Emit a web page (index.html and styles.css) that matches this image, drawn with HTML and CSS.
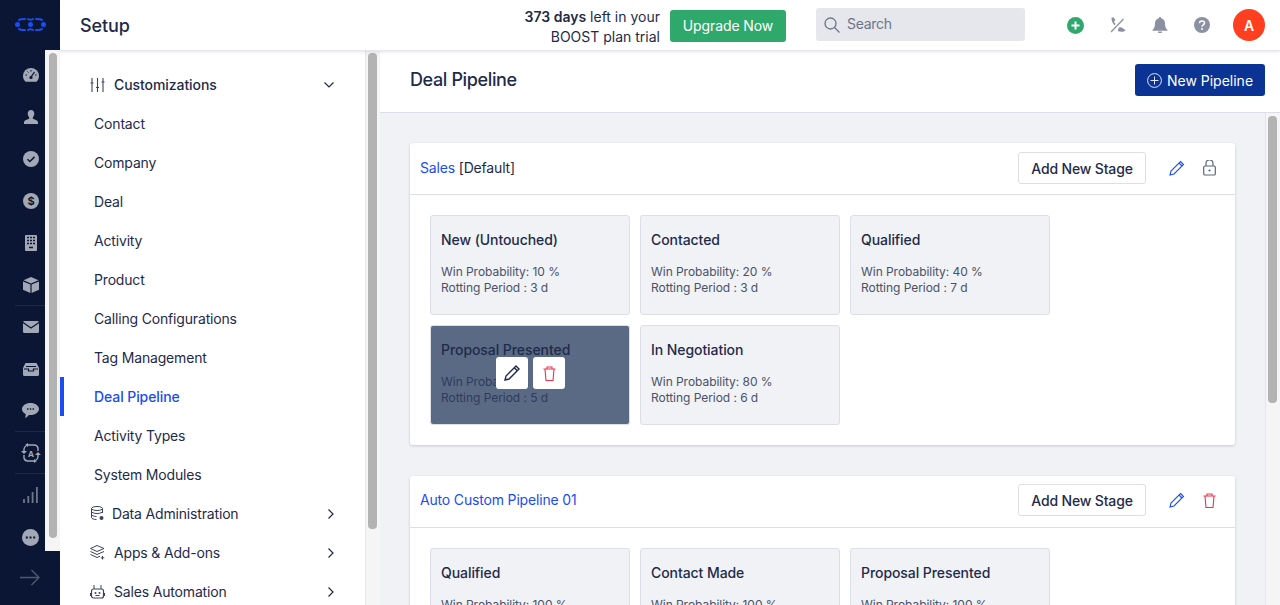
FILE: index.html
```html
<!DOCTYPE html>
<html lang="en">
<head>
    <meta charset="UTF-8">
    <meta name="viewport" content="width=device-width, initial-scale=1.0">
    <title>Setup - Deal Pipeline</title>
    <link rel="stylesheet" href="styles.css">
</head>
<body>
    <!-- left icon rail -->
    <nav class="rail">
        <div class="rail-logo">
            <svg width="31" height="13" viewBox="0 0 31 13"><path d="M4 2C5 1 7 1 10 1M13 1q2.500 1.500 5 0M21 1c3 0 5 0 6 1M4 11c1 1 3 1 6 1M13 12q2.500-1.500 5 0M21 12c3 0 5 0 6-1" fill="none" stroke="#1c4df0" stroke-width="2" stroke-linecap="round"/><circle cx="2.500" cy="6.500" r="2.500" fill="#1c4df0"/><circle cx="15.500" cy="6.500" r="2.500" fill="#1c4df0"/><circle cx="28.500" cy="6.500" r="2.500" fill="#1c4df0"/></svg>
        </div>
        <div class="rail-icons">
            <span class="rail-icon"><svg width="16" height="14" viewBox="0 0 16 14"><path d="M8 0a8 8 0 0 0-8 8c0 2.400 1 4.400 2.500 5.700h11C15 12.400 16 10.400 16 8a8 8 0 0 0-8-8z" fill="#a3a8b6"/><path d="M8 9l3.500-5" stroke="#0a1633" stroke-width="1.300"/><circle cx="8" cy="9.500" r="1.600" fill="#0a1633"/><path d="M2.500 7h1.500M12 7h1.500M4.500 3.500l1 1M8 2v1.500" stroke="#0a1633"/></svg></span>
            <span class="rail-icon"><svg width="14" height="14" viewBox="0 0 14 14"><path d="M7 0c2 0 3.300 1.500 3.300 3.600 0 1.500-.7 3-1.500 3.800v1.100c0 .6 4.500 1.300 5.200 3.500v2H0v-2c.7-2.200 5.200-2.900 5.200-3.500V7.400C4.400 6.600 3.700 5.100 3.700 3.600 3.700 1.500 5 0 7 0z" fill="#a3a8b6"/></svg></span>
            <span class="rail-icon"><svg width="16" height="16" viewBox="0 0 16 16"><circle cx="8" cy="8" r="8" fill="#a3a8b6"/><path d="M4.500 8.200l2.400 2.300 4.600-4.600" fill="none" stroke="#0a1633" stroke-width="1.500"/></svg></span>
            <span class="rail-icon"><svg width="16" height="16" viewBox="0 0 16 16"><circle cx="8" cy="8" r="8" fill="#a3a8b6"/><text x="8" y="12" text-anchor="middle" class="rail-dollar">$</text></svg></span>
            <span class="rail-icon"><svg width="12" height="16" viewBox="0 0 12 16"><rect width="12" height="16" rx="1" fill="#a3a8b6"/><path d="M2 2.500h2M5 2.500h2M8 2.500h2M2 5.500h2M5 5.500h2M8 5.500h2M2 8.500h2M5 8.500h2M8 8.500h2M4 12.500h4" stroke="#0a1633" stroke-width="1.300"/></svg></span>
            <span class="rail-icon rail-last"><svg width="16" height="16" viewBox="0 0 16 16"><path d="M8 0l7.500 3.200L8 6.400.5 3.200z" fill="#a3a8b6"/><path d="M0 4.400l7.400 3.200V16L0 12.800zM16 4.400L8.600 7.600V16l7.400-3.200z" fill="#a3a8b6"/></svg></span>
            <span class="rail-icon"><svg width="16" height="12" viewBox="0 0 16 12"><rect width="16" height="12" rx="1.500" fill="#a3a8b6"/><path d="M0 1.500l8 5.500 8-5.500" fill="none" stroke="#0a1633" stroke-width="1.300"/></svg></span>
            <span class="rail-icon"><svg width="16" height="13" viewBox="0 0 16 13"><path d="M2.500 0h11L16 5v6.500a1.500 1.500 0 0 1-1.500 1.500h-13A1.500 1.500 0 0 1 0 11.500V5z" fill="#a3a8b6"/><path d="M3 3.500h10M1 6h4.500v2h5V6H15" fill="none" stroke="#0a1633" stroke-width="1.200"/></svg></span>
            <span class="rail-icon rail-last"><svg width="17" height="15" viewBox="0 0 17 15"><path d="M8.500 0C13.200 0 17 2.700 17 6s-3.800 6-8.500 6c-.6 0-1.200 0-1.700-.1C5.800 13.400 4.300 14.500 3 15c.4-1 .8-2.300.6-4C1.400 10 0 8.100 0 6c0-3.300 3.800-6 8.500-6z" fill="#a3a8b6"/><path d="M5 6h1.400M7.800 6h1.400M10.600 6H12" stroke="#0a1633" stroke-width="1.400"/></svg></span>
            <span class="rail-icon rail-last"><svg width="20" height="20" viewBox="0 0 20 20"><g fill="none" stroke="#a3a8b6" stroke-width="1.400"><path d="M7 2h6a4 4 0 0 1 4 3v3M13 18H7a4 4 0 0 1-4-3v-3M3 8V6a4 4 0 0 1 2-3M17 12v2a4 4 0 0 1-2 3"/></g><path d="M7 0v4L4 2zM13 16v4l3-2zM0 8h6l-3 3zM14 12h6l-3-3z" fill="#a3a8b6"/><text x="10" y="13.500" text-anchor="middle" class="rail-letter">A</text></svg></span>
            <span class="rail-icon"><svg width="15" height="16" viewBox="0 0 15 16"><path d="M1 16v-4M5.300 16V9M9.600 16V5M13.900 16V0" stroke="#6f7689" stroke-width="1.800"/></svg></span>
            <span class="rail-icon"><svg width="17" height="17" viewBox="0 0 17 17"><circle cx="8.500" cy="8.500" r="8.500" fill="#a3a8b6"/><path d="M3.800 8.500h2M7.500 8.500h2M11.200 8.500h2" stroke="#0a1633" stroke-width="2"/></svg></span>
        </div>
        <div class="rail-expand">
            <svg width="20" height="17" viewBox="0 0 20 17"><path d="M0 8.500h19M11.500 1l7.500 7.500-7.500 7.500" fill="none" stroke="#4f5870" stroke-width="1.500"/></svg>
        </div>
        <div class="rail-scroll"><div class="rail-thumb"></div></div>
    </nav>

    <div class="page">
        <header class="topbar">
            <div class="topbar-title">Setup</div>
            <div class="trial"><strong>373 days</strong> left in your<br>BOOST plan trial</div>
            <button class="upgrade">Upgrade Now</button>
            <div class="search">
                <svg width="16" height="16" viewBox="0 0 16 16"><circle cx="6.500" cy="6.500" r="5.500" fill="none" stroke="#6d7488" stroke-width="1.300"/><path d="M10.500 10.500L15.500 15.500" stroke="#6d7488" stroke-width="1.300"/></svg>
                <span>Search</span>
            </div>
            <div class="top-icons">
                <svg width="17" height="17" viewBox="0 0 17 17"><circle cx="8.500" cy="8.500" r="8.500" fill="#2fa96b"/><path d="M8.500 4.500v8M4.500 8.500h8" stroke="#fff" stroke-width="2"/></svg>
                <svg width="16" height="16" viewBox="0 0 16 16"><path d="M1.500 0.500l2.500 0 1.300 3-1.400 1.200c.4.900 1 1.700 1.700 2.400L4.500 8.300C2.600 6.300 1.300 3.500 1.500.5zM8.500 11.200l1.400-1.300 3 1.300 2.600 2c-1.500 1.800-5 1.900-7.700.7z" fill="#8b91a1"/><path d="M1 15L13.500 2" stroke="#8b91a1" stroke-width="1.300"/></svg>
                <svg width="16" height="16" viewBox="0 0 16 16"><path d="M8 0c.7 0 1.200.5 1.200 1.200C11.500 1.800 13 3.800 13 6.300c0 3.400.8 5.200 2.500 6.700v.8h-15V13C2.200 11.500 3 9.700 3 6.300c0-2.500 1.500-4.500 3.800-5.100C6.800.5 7.300 0 8 0zM6 14.500h4a2 2 0 0 1-4 0z" fill="#8b91a1"/></svg>
                <svg width="16" height="16" viewBox="0 0 16 16"><circle cx="8" cy="8" r="8" fill="#8b91a1"/><path d="M5.500 6.200C5.500 4.800 6.600 4 8 4s2.500.8 2.500 2.100c0 1.800-2.500 1.800-2.500 3.700" fill="none" stroke="#fff" stroke-width="1.500"/><circle cx="8" cy="12" r="1" fill="#fff"/></svg>
                <div class="avatar">A</div>
            </div>
        </header>

        <div class="content">
            <aside class="sidebar">
                <ul class="side-list">
                    <li class="side-group side-open">
                        <svg class="side-icon" width="14" height="14" viewBox="0 0 14 14"><path d="M1.500 0v14M7 0v14M12.500 0v14M0 5h3M5.500 9.500h3M11 4h3" fill="none" stroke="#3a4460" stroke-width="1.100"/></svg>
                        <span>Customizations</span>
                        <svg class="side-caret" width="10" height="6" viewBox="0 0 10 6"><path d="M.5.500L5 5 9.500.500" fill="none" stroke="#1f2a4a" stroke-width="1.200"/></svg>
                    </li>
                    <li class="side-item">Contact</li>
                    <li class="side-item">Company</li>
                    <li class="side-item">Deal</li>
                    <li class="side-item">Activity</li>
                    <li class="side-item">Product</li>
                    <li class="side-item">Calling Configurations</li>
                    <li class="side-item">Tag Management</li>
                    <li class="side-item side-active">Deal Pipeline</li>
                    <li class="side-item">Activity Types</li>
                    <li class="side-item">System Modules</li>
                    <li class="side-group">
                        <svg class="side-icon" width="13" height="15" viewBox="0 0 13 15"><g fill="none" stroke="#3a4460"><ellipse cx="6" cy="2.500" rx="5.500" ry="2"/><path d="M.5 2.500v9c0 1 2 2 5 2M11.500 2.500V7M.5 5.500c0 1 2.500 2 5.500 2s5.500-1 5.500-2M.5 8.500c0 1 2.500 2 5 2"/></g><circle cx="10.500" cy="12" r="2" fill="#3a4460"/></svg>
                        <span class="side-tight">Data Administration</span>
                        <svg class="side-caret" width="6" height="10" viewBox="0 0 6 10"><path d="M.5.500L5 5 .5 9.500" fill="none" stroke="#1f2a4a" stroke-width="1.200"/></svg>
                    </li>
                    <li class="side-group">
                        <svg class="side-icon" width="15" height="15" viewBox="0 0 15 15"><path d="M7 .5L14 3.500 7 6.500 0.500 3.500zM.5 6.500L7 9.500l7-3M.5 9.500L7 12.500l3-1.300M12.500 11v3.500M10.800 12.800h3.500" fill="none" stroke="#3a4460"/></svg>
                        <span>Apps &amp; Add-ons</span>
                        <svg class="side-caret" width="6" height="10" viewBox="0 0 6 10"><path d="M.5.500L5 5 .5 9.500" fill="none" stroke="#1f2a4a" stroke-width="1.200"/></svg>
                    </li>
                    <li class="side-group">
                        <svg class="side-icon" width="14" height="14" viewBox="0 0 14 14"><rect x="1" y="4" width="12" height="9" rx="2" fill="none" stroke="#3a4460" stroke-width="1.200"/><path d="M3.500 0v4M10.500 0v4M0 8v3M14 8v3" stroke="#3a4460"/><circle cx="5" cy="8" r="1" fill="#3a4460"/><circle cx="9" cy="8" r="1" fill="#3a4460"/><path d="M5 10.500h4" stroke="#3a4460"/></svg>
                        <span>Sales Automation</span>
                        <svg class="side-caret" width="6" height="10" viewBox="0 0 6 10"><path d="M.5.500L5 5 .5 9.500" fill="none" stroke="#1f2a4a" stroke-width="1.200"/></svg>
                    </li>
                </ul>
            </aside>
            <div class="scroll side-scroll"><div class="thumb side-thumb"></div></div>

            <main class="main">
                <div class="main-head">
                    <h1>Deal Pipeline</h1>
                    <button class="new-pipeline">
                        <svg width="15" height="15" viewBox="0 0 15 15"><circle cx="7.500" cy="7.500" r="6.900" fill="none" stroke="#dfe5f5" stroke-width="1"/><path d="M7.500 3.500v8M3.500 7.500h8" stroke="#dfe5f5"/></svg>
                        New Pipeline
                    </button>
                </div>
                <div class="main-body">
                    <div class="pipelines">
                        <section class="pipeline">
                            <div class="pipeline-head">
                                <div class="pipeline-name"><a>Sales</a> [Default]</div>
                                <button class="add-stage">Add New Stage</button>
                                <svg class="head-icon" width="16" height="16" viewBox="0 0 16 16"><path d="M11.500 1.500l3 3L5 14l-4 1 1-4zM10 3l3 3" fill="none" stroke="#1c4df0" stroke-width="1.100"/></svg>
                                <svg class="head-icon" width="13" height="16" viewBox="0 0 13 16"><rect x=".7" y="6" width="11.600" height="9" rx="1.300" fill="none" stroke="#5c6479" stroke-width="1.200"/><path d="M3 6V3.500a3.500 3.500 0 0 1 7 0V6" fill="none" stroke="#5c6479" stroke-width="1.200"/><circle cx="6.500" cy="10.500" r="1.100" fill="#5c6479"/></svg>
                            </div>
                            <div class="stages">
                                <div class="stage">
                                    <h3>New (Untouched)</h3>
                                    <p>Win Probability: 10 %<br>Rotting Period : 3 d</p>
                                </div>
                                <div class="stage">
                                    <h3>Contacted</h3>
                                    <p>Win Probability: 20 %<br>Rotting Period : 3 d</p>
                                </div>
                                <div class="stage">
                                    <h3>Qualified</h3>
                                    <p>Win Probability: 40 %<br>Rotting Period : 7 d</p>
                                </div>
                                <div class="stage stage-hover">
                                    <h3>Proposal Presented</h3>
                                    <p>Win Probability: 60 %<br>Rotting Period : 5 d</p>
                                    <div class="stage-actions">
                                        <button class="stage-btn"><svg width="16" height="16" viewBox="0 0 16 16"><path d="M12 1l3 3L5 14l-4 1 1-4zM10.300 2.700l3 3" fill="none" stroke="#1f2a4a" stroke-width="1.400"/></svg></button>
                                        <button class="stage-btn"><svg width="13" height="15" viewBox="0 0 13 15"><path d="M.5 3h12M4 3V1h5v2M2 3l1 11.500h7L11 3" fill="none" stroke="#f0304a" stroke-width="1.100"/></svg></button>
                                    </div>
                                </div>
                                <div class="stage">
                                    <h3>In Negotiation</h3>
                                    <p>Win Probability: 80 %<br>Rotting Period : 6 d</p>
                                </div>
                            </div>
                        </section>

                        <section class="pipeline">
                            <div class="pipeline-head">
                                <div class="pipeline-name"><a>Auto Custom Pipeline 01</a></div>
                                <button class="add-stage">Add New Stage</button>
                                <svg class="head-icon" width="16" height="16" viewBox="0 0 16 16"><path d="M11.500 1.500l3 3L5 14l-4 1 1-4zM10 3l3 3" fill="none" stroke="#1c4df0" stroke-width="1.100"/></svg>
                                <svg class="head-icon" width="13" height="15" viewBox="0 0 13 15"><path d="M.5 3h12M4 3V1h5v2M2 3l1 11.500h7L11 3" fill="none" stroke="#f0304a" stroke-width="1.100"/></svg>
                            </div>
                            <div class="stages">
                                <div class="stage">
                                    <h3>Qualified</h3>
                                    <p>Win Probability: 100 %<br>Rotting Period : 3 d</p>
                                </div>
                                <div class="stage">
                                    <h3>Contact Made</h3>
                                    <p>Win Probability: 100 %<br>Rotting Period : 3 d</p>
                                </div>
                                <div class="stage">
                                    <h3>Proposal Presented</h3>
                                    <p>Win Probability: 100 %<br>Rotting Period : 3 d</p>
                                </div>
                            </div>
                        </section>
                    </div>
                    <div class="scroll main-scroll"><div class="thumb main-thumb"></div></div>
                </div>
            </main>
        </div>
    </div>
</body>
</html>
```

FILE: styles.css
```css
* {
    box-sizing: border-box;
}
html, body {
    height: 100%;
}
body {
    margin: 0;
    display: flex;
    overflow: hidden;
    font-family: 'Inter', 'Liberation Sans', sans-serif;
    font-size: 14px;
    color: #1f2a4a;
    background-color: #fff;
}
button {
    font-family: inherit;
    cursor: pointer;
}

/* left rail */
.rail {
    position: relative;
    flex: 0 0 60px;
    height: 605px;
    display: flex;
    flex-direction: column;
    background-color: #0a1633;
}
.rail-logo {
    height: 50px;
    padding: 18px 0 0 15px;
    display: flex;
}
.rail-icons {
    display: flex;
    flex-direction: column;
    padding-top: 4px;
}
.rail-icon {
    width: 45px;
    height: 42px;
    padding-left: 16px;
    display: flex;
    justify-content: center;
    align-items: center;
}
.rail-last {
    width: 30px;
    margin-left: 15px;
    padding-left: 1px;
    border-bottom: 1px solid #1d2945;
}
.rail-dollar {
    font-size: 11px;
    font-weight: 700;
    fill: #0a1633;
}
.rail-letter {
    font-size: 8px;
    font-weight: 700;
    fill: #a3a8b6;
}
.rail-expand {
    padding: 11px 0 0 20px;
}
.rail-scroll {
    position: absolute;
    top: 50px;
    left: 45px;
    width: 15px;
    height: 501px;
    background-color: #f5f5f5;
}
.rail-thumb {
    width: 8px;
    height: 485px;
    margin: 3px 0 0 4px;
    border-radius: 4px;
    background-color: #b3b3b3;
}

/* top bar */
.page {
    flex: 1;
    min-width: 0;
    display: flex;
    flex-direction: column;
    height: 605px;
}
.topbar {
    position: relative;
    z-index: 2;
    height: 51px;
    flex: none;
    display: flex;
    align-items: center;
    padding: 0 15px 0 20px;
    background-color: #fff;
    border-bottom: 1px solid #e4e6ee;
    box-shadow: 0 1px 3px rgba(31,42,74,0.12);
}
.topbar-title {
    flex: 1;
    font-size: 18px;
    font-weight: 500;
    letter-spacing: -0.1px;
}
.trial {
    text-align: right;
    line-height: 20px;
    padding-top: 3px;
}
.trial strong {
    font-weight: 600;
}
.upgrade {
    width: 116px;
    height: 32px;
    margin: 2px 0 0 10px;
    padding: 0 0 2px;
    border: 0;
    border-radius: 3px;
    background-color: #2fa96b;
    color: #fff;
    font-size: 14px;
    letter-spacing: -0.1px;
}
.search {
    width: 209px;
    height: 33px;
    margin: 0 0 1px 30px;
    padding-left: 8px;
    display: flex;
    align-items: center;
    gap: 7px;
    border-radius: 3px;
    background-color: #e5e7ed;
    color: #6d7488;
    letter-spacing: -0.3px;
}
.search span {
    padding-bottom: 2px;
}
.top-icons {
    display: flex;
    align-items: center;
    gap: 26px;
    margin-left: 42px;
}
.avatar {
    width: 32px;
    height: 32px;
    margin-left: -3px;
    display: flex;
    justify-content: center;
    align-items: center;
    border-radius: 50%;
    background-color: #ff3f1f;
    color: #fff;
    font-weight: 600;
}

/* setup sidebar */
.content {
    flex: 1;
    min-height: 0;
    display: flex;
}
.sidebar {
    width: 305px;
    flex: none;
    overflow: hidden;
    background-color: #fff;
    letter-spacing: -0.17px;
}
.side-list {
    list-style: none;
    margin: 0;
    padding: 14px 0 0;
}
.side-list li {
    height: 39px;
    display: flex;
    align-items: center;
}
.side-item {
    padding-left: 34px;
}
.side-list .side-active {
    color: #1c4df0;
    font-weight: 500;
    letter-spacing: -0.08px;
    border-left: 4px solid #1c4df0;
    padding-left: 30px;
}
.side-group {
    padding: 0 29px 0 30px;
}
.side-list .side-open {
    font-weight: 500;
    letter-spacing: -0.07px;
}
.side-icon {
    width: 15px;
    flex: none;
    margin-right: 9px;
}
.side-tight {
    margin-left: -2px;
}
.side-caret {
    margin-left: auto;
    margin-right: 2px;
}

/* fake scrollbars */
.scroll {
    width: 15px;
    flex: none;
    background-color: #f5f5f5;
    border-left: 1px solid #e4e6ee;
}
.thumb {
    width: 9px;
    margin-left: 2px;
    border-radius: 4px;
    background-color: #b3b3b3;
}
.side-thumb {
    height: 476px;
    margin-top: 2px;
}
.main-thumb {
    height: 287px;
    margin-top: 3px;
}

/* main panel */
.main {
    flex: 1;
    min-width: 0;
    display: flex;
    flex-direction: column;
}
.main-head {
    height: 62px;
    flex: none;
    display: flex;
    align-items: center;
    justify-content: space-between;
    padding: 0 15px 5px 30px;
    border-bottom: 1px solid #dcdfe7;
    background-color: #fff;
}
.main-head h1 {
    margin: 0;
    font-size: 18px;
    font-weight: 500;
    letter-spacing: -0.37px;
}
.new-pipeline {
    width: 130px;
    height: 32px;
    margin-top: 2px;
    display: flex;
    align-items: center;
    justify-content: center;
    gap: 5px;
    border: 0;
    border-radius: 3px;
    background-color: #0b3394;
    color: #fff;
    font-size: 14px;
}
.main-body {
    flex: 1;
    min-height: 0;
    display: flex;
    background-color: #f0f2f6;
}
.pipelines {
    flex: 1;
    min-width: 0;
    overflow: hidden;
    padding: 30px 30px 0;
}
.pipeline {
    margin-bottom: 31px;
    border-radius: 3px;
    background-color: #fff;
    box-shadow: 0 1px 3px rgba(31,42,74,0.2);
}
.pipeline-head {
    height: 52px;
    display: flex;
    align-items: center;
    padding: 0 19px 1px 10px;
    border-bottom: 1px solid #dcdfe7;
}
.pipeline + .pipeline .pipeline-head {
    padding-bottom: 3px;
}
.pipeline-name {
    flex: 1;
    padding-bottom: 2px;
    letter-spacing: -0.17px;
}
.pipeline-name a {
    color: #1c4df0;
}
.add-stage {
    width: 128px;
    height: 32px;
    margin-right: 23px;
    border: 1px solid #dcdfe7;
    border-radius: 3px;
    background-color: #fff;
    color: #1f2a4a;
    font-size: 14px;
    font-weight: 500;
    letter-spacing: -0.15px;
}
.head-icon {
    margin-right: 18px;
}
.head-icon:last-child {
    margin-right: 0;
}
.stages {
    display: grid;
    grid-template-columns: repeat(3, 200px);
    gap: 10px;
    padding: 20px;
}
.stage {
    position: relative;
    height: 100px;
    padding: 14px 10px;
    border: 1px solid #dcdfe7;
    border-radius: 3px;
    background-color: #f0f2f6;
}
.stage h3 {
    margin: 0;
    font-size: 14px;
    line-height: 20px;
    font-weight: 500;
    letter-spacing: -0.07px;
}
.stage p {
    margin: 14px 0 0;
    font-size: 12px;
    line-height: 16px;
    color: #4a5168;
    letter-spacing: -0.05px;
}
.stage-hover {
    background-color: #5a6a85;
}
.stage-hover p {
    color: #2f3b5a;
}
.stage-actions {
    position: absolute;
    top: 31px;
    left: 65px;
    display: flex;
    gap: 5px;
}
.stage-btn {
    width: 32px;
    height: 32px;
    padding: 0;
    display: flex;
    justify-content: center;
    align-items: center;
    border: 0;
    border-radius: 3px;
    background-color: #fff;
}
```
